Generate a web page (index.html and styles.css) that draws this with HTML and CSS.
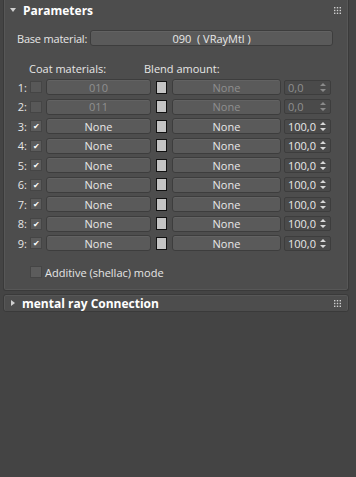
FILE: index.html
```html
<!DOCTYPE html>
<html lang="en">
<head>
    <meta charset="UTF-8">
    <title>Blend material - Parameters</title>
    <link rel="stylesheet" href="styles.css">
</head>
<body>
    <div class="rollout">
        <div class="rollout-head">
            <span class="arrow arrow-open"></span>
            <span class="rollout-title">Parameters</span>
            <svg class="grip" width="7" height="7" viewBox="0 0 7 7">
                <g fill="#d0d0d0">
                    <rect x="0" y="0" width="1.4" height="1.4"/><rect x="2.8" y="0" width="1.4" height="1.4"/><rect x="5.6" y="0" width="1.4" height="1.4"/>
                    <rect x="0" y="2.8" width="1.4" height="1.4"/><rect x="2.8" y="2.8" width="1.4" height="1.4"/><rect x="5.6" y="2.8" width="1.4" height="1.4"/>
                    <rect x="0" y="5.6" width="1.4" height="1.4"/><rect x="2.8" y="5.6" width="1.4" height="1.4"/><rect x="5.6" y="5.6" width="1.4" height="1.4"/>
                </g>
            </svg>
        </div>
        <div class="rollout-body">
            <div class="base-row">
                <span class="label">Base material:</span>
                <button class="btn btn-wide">090 &nbsp;( VRayMtl )</button>
            </div>

            <div class="col-heads">
                <span class="head-coat">Coat materials:</span>
                <span class="head-blend">Blend amount:</span>
            </div>

            <div class="coat-list" id="coatList"></div>

            <div class="additive">
                <span class="check"></span>
                <span class="label">Additive (shellac) mode</span>
            </div>
        </div>
    </div>

    <div class="rollout rollout-closed">
        <div class="rollout-head">
            <span class="arrow arrow-shut"></span>
            <span class="rollout-title">mental ray Connection</span>
            <svg class="grip" width="7" height="7" viewBox="0 0 7 7">
                <g fill="#d0d0d0">
                    <rect x="0" y="0" width="1.4" height="1.4"/><rect x="2.8" y="0" width="1.4" height="1.4"/><rect x="5.6" y="0" width="1.4" height="1.4"/>
                    <rect x="0" y="2.8" width="1.4" height="1.4"/><rect x="2.8" y="2.8" width="1.4" height="1.4"/><rect x="5.6" y="2.8" width="1.4" height="1.4"/>
                    <rect x="0" y="5.6" width="1.4" height="1.4"/><rect x="2.8" y="5.6" width="1.4" height="1.4"/><rect x="5.6" y="5.6" width="1.4" height="1.4"/>
                </g>
            </svg>
        </div>
    </div>

    <script>
        const coats = [
            { on: false, mat: "010", amount: "0,0" },
            { on: false, mat: "011", amount: "0,0" },
            { on: true, mat: "None", amount: "100,0" },
            { on: true, mat: "None", amount: "100,0" },
            { on: true, mat: "None", amount: "100,0" },
            { on: true, mat: "None", amount: "100,0" },
            { on: true, mat: "None", amount: "100,0" },
            { on: true, mat: "None", amount: "100,0" },
            { on: true, mat: "None", amount: "100,0" }
        ];

        const arrows = '<svg class="spin-arrows" width="6" height="9" viewBox="0 0 6 9">' +
            '<path d="M3 0 L6 3 L0 3 Z M3 9 L6 6 L0 6 Z" fill="currentColor"/></svg>';

        const list = document.getElementById("coatList");
        coats.forEach((c, i) => {
            const row = document.createElement("div");
            row.className = "coat-row" + (c.on ? "" : " off");
            row.innerHTML =
                '<span class="num">' + (i + 1) + ':</span>' +
                '<span class="check">' + (c.on ? '&#10004;' : '') + '</span>' +
                '<button class="btn btn-mat">' + c.mat + '</button>' +
                '<span class="swatch"></span>' +
                '<button class="btn btn-blend">None</button>' +
                '<span class="spinner"><span class="spin-val">' + c.amount + '</span>' +
                arrows + '</span>';
            list.appendChild(row);
        });
    </script>
</body>
</html>
```

FILE: styles.css
```css
body {
    margin: 0;
    background-color: #444444;
    color: #e6e6e6;
    font-family: "Open Sans", "Noto Sans", sans-serif;
    font-size: 11px;
    width: 356px;
    height: 477px;
    overflow: hidden;
}
.rollout {
    margin: 0 7px 0 3px;
    background-color: #4d4d4d;
    border: 1px solid #3a3a3a;
    border-top: none;
    border-radius: 0 0 3px 3px;
    box-shadow: inset 1px 0 0 #575757, inset -1px 0 0 #575757, inset 0 -1px 0 #575757;
}
.rollout-closed {
    margin-top: 3px;
    border-top: 1px solid #3a3a3a;
    border-radius: 3px;
    box-shadow: inset 0 1px 0 #575757, inset 1px 0 0 #575757, inset -1px 0 0 #575757;
}
.rollout-head {
    display: flex;
    align-items: center;
    height: 20px;
    padding-left: 6px;
}
.rollout-closed .rollout-head {
    height: 16px;
}
.rollout-title {
    font-weight: bold;
    color: #ffffff;
    font-size: 12px;
    margin-left: 7px;
    flex: 1;
}
.arrow {
    width: 0;
    height: 0;
}
.arrow-open {
    border-left: 3px solid transparent;
    border-right: 3px solid transparent;
    border-top: 4px solid #d0d0d0;
}
.arrow-shut {
    border-top: 3px solid transparent;
    border-bottom: 3px solid transparent;
    border-left: 4px solid #d0d0d0;
    margin-left: 1px;
}
.grip {
    margin-right: 7px;
}
.rollout-body {
    padding: 10px 0 0 0;
    height: 270px;
    box-sizing: border-box;
}
.label {
    color: #e6e6e6;
}
.base-row {
    display: flex;
    align-items: center;
    padding-left: 13px;
    padding-right: 15px;
    gap: 3px;
    letter-spacing: -0.2px;
}
.btn {
    font-family: inherit;
    font-size: 11px;
    color: #e8e8e8;
    background-color: #5a5a5a;
    border: 1px solid #3d3d3d;
    border-radius: 3px;
    height: 16px;
    padding: 0;
    line-height: 13px;
    box-shadow: inset 0 1px 0 #626262;
}
.btn-wide {
    flex: 1;
    height: 16px;
}
.col-heads {
    display: flex;
    margin-top: 15px;
    height: 15px;
    align-items: center;
}
.head-coat {
    margin-left: 25px;
    width: 115px;
}
.coat-list {
    display: flex;
    flex-direction: column;
    gap: 3px;
    margin-top: 3px;
}
.coat-row {
    display: flex;
    align-items: center;
    height: 16.5px;
}
.num {
    width: 23px;
    text-align: right;
    margin-right: 3px;
}
.check {
    width: 10px;
    height: 10px;
    background-color: #5c5c5c;
    border: 1px solid #454545;
    font-size: 8px;
    line-height: 10px;
    text-align: center;
    color: #ffffff;
    margin-right: 4px;
}
.btn-mat {
    width: 105px;
}
.swatch {
    width: 9px;
    height: 11px;
    background-color: #c4c4c4;
    border: 1px solid #111111;
    margin-left: 5px;
    margin-right: 5px;
}
.btn-blend {
    width: 109px;
}
.spinner {
    display: flex;
    align-items: center;
    width: 47px;
    height: 15px;
    margin-left: 3px;
    border: 1px solid #3d3d3d;
    border-radius: 2px;
    background-color: #4a4a4a;
    box-sizing: border-box;
    padding-left: 3px;
    color: #e8e8e8;
}
.spin-val {
    flex: 1;
}
.spin-arrows {
    margin-right: 4px;
    color: #d8d8d8;
}
.off .btn,
.off .spinner {
    color: #8f8f8f;
}
.off .spin-arrows {
    color: #8a8a8a;
}
.off .check {
    background-color: #585858;
}
.additive {
    display: flex;
    align-items: center;
    margin-top: 13px;
    padding-left: 26px;
}
.additive .check {
    margin-right: 3px;
}
```
